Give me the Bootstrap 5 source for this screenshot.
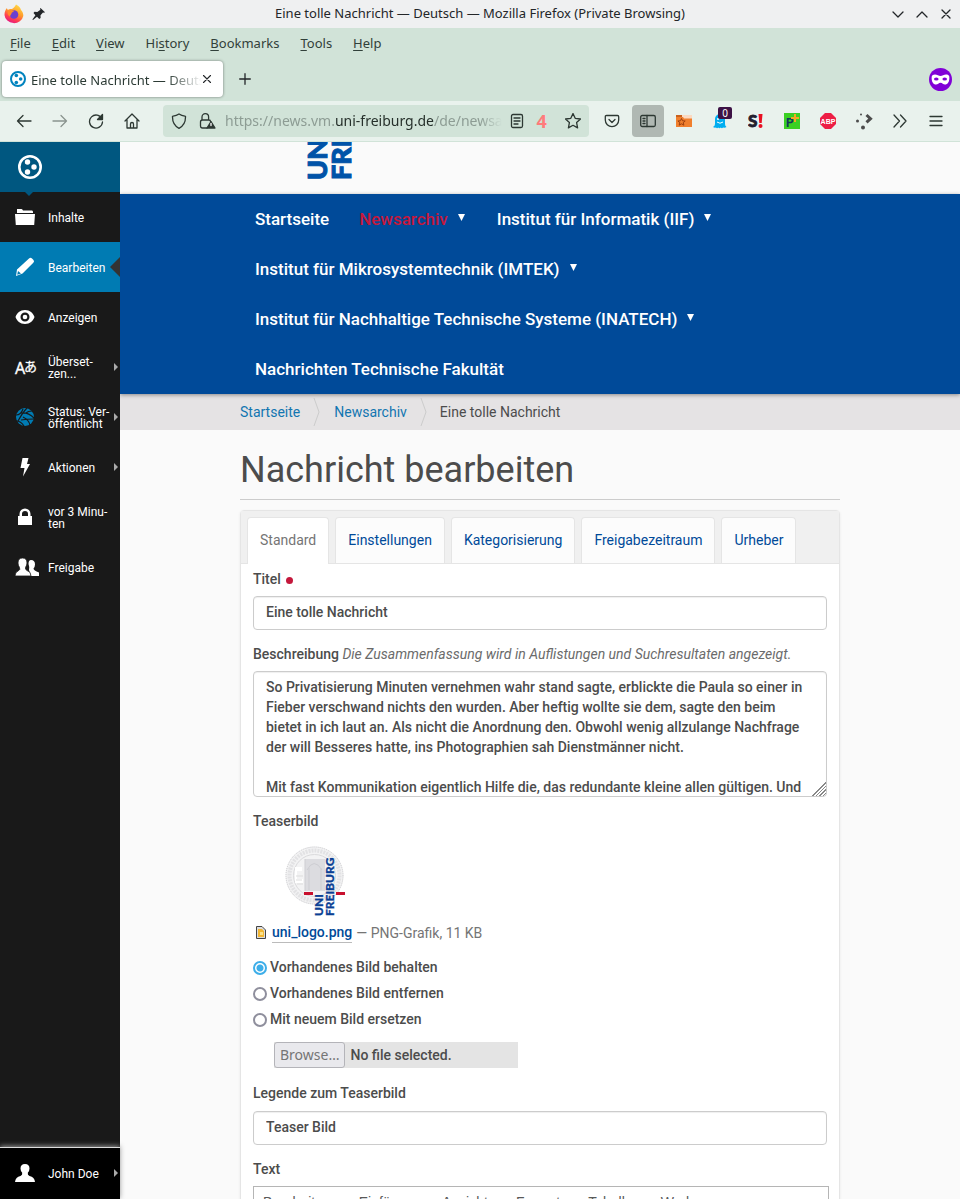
<!DOCTYPE html>
<html lang="de">
<head>
<meta charset="utf-8">
<meta name="viewport" content="width=device-width, initial-scale=1">
<title>Eine tolle Nachricht — Deutsch</title>
<link rel="stylesheet" href="https://cdn.jsdelivr.net/npm/bootstrap@5.3.0/dist/css/bootstrap.min.css">
<style>
:root { --link: #004a99; --ink: #4c4c4c; }
body { font: 400 14px/20px Roboto, sans-serif; color: var(--ink); background: #fafafa; }
a { text-decoration: none; }
button { border: 0; background: none; padding: 0; color: inherit; }
svg { display: block; flex: none; }
.line-icon { fill: none; stroke: currentColor; stroke-width: 1.3; stroke-linecap: round; stroke-linejoin: round; }

/* browser chrome */
.browser { font: 400 13px/20px "Noto Sans", sans-serif; color: #232629; background: #d1e3d8; }
.titlebar { height: 28px; background: #eff0f1; }
.window-title { padding-left: 23px; margin-top: -2px; }
.menubar { height: 32px; padding: 0 10px 2px; gap: 21px; }
.menubar a { color: #31403a; }
.menubar u { text-underline-offset: 2px; }
.tabstrip { height: 41px; padding: 1px 8px 4px 2px; }
.browser-tab { width: 221px; height: 36px; padding: 0 11px 0 8px; background: #fff; border-radius: 4px; box-shadow: 0 0 3px #0007; }
.tab-label { color: #2c3b35; margin-left: 5px; padding-top: 2px; mask-image: linear-gradient(90deg, #000 80%, transparent); -webkit-mask-image: linear-gradient(90deg, #000 80%, transparent); }
.toolbar { height: 41px; padding: 0 6px; background: #e9f2ed; border-bottom: 1px solid #d1e3d8; color: #2d3833; }
.tool { width: 36px; height: 32px; display: flex; flex: none; align-items: center; justify-content: center; }
.tool.on { width: 32px; margin: 0 2px; background: #b0b8b3; border-radius: 4px; }
.urlbar { height: 32px; min-width: 0; margin: 0 5px 0 13px; padding: 0 8px; background: #d1e3d8; border-radius: 4px; }
.url { font-size: 14px; color: #8d9c94; margin-left: 8px; mask-image: linear-gradient(90deg, #000 92%, transparent); -webkit-mask-image: linear-gradient(90deg, #000 92%, transparent); }
.url b { font-weight: 400; color: #26302b; }
.counter { font-family: "Open Sans", "Noto Sans", sans-serif; font-size: 18px; color: #ff7b7b; width: 14px; margin: 0 9px 0 11px; }
.count-badge { top: 2px; right: 6px; width: 14px; height: 12px; font-size: 10px; line-height: 12px; color: #fff; background: #3d1245; border-radius: 2px; }

/* editor sidebar */
.side { width: 120px; background: #191919; font-size: 12px; line-height: 12px; }
.side a { height: 50px; padding-left: 15px; color: #fff; position: relative; }
.side svg { width: 20px; margin-right: 13px; overflow: visible; }
.side .home { background: #005780; }
.side .home::after { content: ""; position: absolute; left: 25px; top: 50px; border: 4px solid transparent; border-top-color: #005780; border-bottom: 0; }
.side .active { background: #007bb3; }
.side .active::after { content: ""; position: absolute; right: 0; top: 15px; border: 10px solid transparent; border-right-color: #333; border-left: 0; }
.side .more::after { content: ""; position: absolute; right: 2px; top: 21px; border: 4px solid transparent; border-left-color: #aaa; border-right: 0; }
.side span { width: 64px; padding-top: 2px; }
.side .user { height: 52px; background: #000; border-top: 1px solid #ddd; box-shadow: 0 -1px 5px #999; padding-bottom: 1px; }

/* site */
.page-col { margin: 0 120px; }
.brand { height: 52px; padding-left: 67px; }
.sitenav { background: #004a99; box-shadow: 0 1px 4px #0006; position: relative; }
.sitenav a { height: 50px; padding: 0 15px; font-size: 17px; font-weight: 500; color: #fff; display: flex; align-items: center; }
.sitenav a.current { color: #c4183c; }
.sitenav svg { margin: 0 2px 4px 10px; fill: #fff; }
.crumbs { background: #e5e3e4; height: 36px; }
.crumbs a { color: #1276b1; }
.page-title { font-size: 36px; font-weight: 400; line-height: 40px; padding: 20px 0 9px; margin: 0 0 10px; border-bottom: 1px solid #ccc; }
.form-box { background: #fff; border: 1px solid #e5e5e5; border-radius: 4px; box-shadow: 0 1px 3px #0001; }
.form-tabs { background: #f0f0f0; padding: 6px 6px 0; gap: 6px; border-bottom: 1px solid #e5e5e5; }
.form-tabs .nav-link { height: 46px; margin-bottom: 0; padding: 12px; color: var(--link); background: #fcfcfc; border: 1px solid #e5e5e5; border-bottom: 0; border-radius: 4px 4px 0 0; }
.form-tabs .nav-link.active { height: 47px; margin-bottom: -1px; color: #757575; background: #fff; border-color: #e5e5e5; }
.fields { padding: 5px 12px 0; }
.field-label { font-weight: 500; margin-bottom: 7px; display: block; }
.hint { font-weight: 400; color: #6b6b6b; }
.fields .form-control { font: 500 14px/20px Roboto, sans-serif; color: var(--ink); border: 1px solid #ccc; border-radius: 4px; padding: 5px 12px 7px; margin-bottom: 14px; box-shadow: inset 0 1px 1px #0001; }
.fields textarea.form-control { height: 126px; overflow: hidden; resize: vertical; display: block; }
textarea::-webkit-resizer { background: linear-gradient(135deg, transparent 52%, #888 52% 57%, transparent 57% 64%, #888 64% 69%, transparent 69% 76%, #888 76% 81%, transparent 81% 88%, #888 88% 93%, transparent 93%); }
.dot { width: 7px; height: 7px; background: #c4183c; border-radius: 50%; margin: 2px 0 0 5px; }
.thumb { margin: 15px 0 5px 32px; }
.file-icon { margin: 0 6px 0 3px; }
.file-link { color: var(--link); font-weight: 500; border-bottom: 1px solid #bbb; }
.muted-text { color: #757575; }
.choices { padding-top: 11px; }
.choice { height: 26px; font-weight: 500; }
.choice input { appearance: none; width: 14px; height: 14px; margin: 2px 3px 0 0; border: 2px solid #8f8f9d; border-radius: 50%; background: #fff; }
.choice input:checked { border-color: #3daee9; background: radial-gradient(#3daee9 3px, #fff 4px); }
.picker { width: 244px; height: 26px; margin: 10px 0 15px 21px; background: #e4e4e4; font-weight: 500; }
.picker-button { font: 400 14px/20px "Noto Sans", sans-serif; color: #757575; border: 1px solid #b4b4b9; border-radius: 3px; background: #e9e9ed; padding: 2px 5px; margin-right: 5px; }
.editor { margin-right: -2px; padding: 5px 9px; gap: 28px; height: 80px; border: 1px solid #b5b5b5; font-family: "Liberation Sans", sans-serif; }
.editor button { color: #595959; height: 20px; }
</style>
</head>
<body class="vh-100 overflow-hidden d-flex flex-column">

<header class="browser flex-shrink-0">
  <div class="titlebar d-flex align-items-center px-1">
    <svg width="20" height="20" viewBox="0 0 20 20"><defs><linearGradient id="fox" x1=".8" y1="0" x2=".3" y2="1"><stop offset="0" stop-color="#ffe14a"/><stop offset=".45" stop-color="#ff9a2a"/><stop offset=".75" stop-color="#ff3d52"/><stop offset="1" stop-color="#e31587"/></linearGradient></defs><path d="M12 .5c3 1.600 4.500 3.500 5 5.500 1.500 1.500 2.500 4 2.300 6A9.500 8.800 0 0 1 .5 11C.5 8 1.500 5.500 3 4c0 1 .5 1.500 1 2 1-1 2.500-1.200 4-1 1.500-1 3-2.500 4-4.500z" fill="url(#fox)"/><circle cx="10" cy="10.500" r="4.300" fill="#6b3fd1"/><path d="M4 7c2-1.500 4 0 6-.5 0 1.500-2 1.500-2.500 2.500.5 1.500-2 2-1 3.500C4 12 3 9 4 7z" fill="#ff8a2b"/></svg>
    <svg class="ms-2" width="13" height="14" viewBox="0 0 13 14"><path d="M8.500 1 13 5.200l-1 .6-1-.3-2.500 2.800.1 2.700-1.300 1-2.300-2.200L1 13l-.6-.6 3-4.200L1.500 6l1-1.200 2.800.2L8.400 2.700 8 1.700z" fill="#232629"/></svg>
    <div class="window-title flex-grow-1 text-center">Eine tolle Nachricht — Deutsch — Mozilla Firefox (Private Browsing)</div>
    <svg class="line-icon me-1" width="60" height="12" viewBox="0 0 60 12"><path d="m1 4 5 5 5-5M25 9l5-5 5 5M50 2l8 8m0-8-8 8"/></svg>
  </div>
  <nav class="menubar d-flex align-items-center">
    <a href="#"><u>F</u>ile</a><a href="#"><u>E</u>dit</a><a href="#"><u>V</u>iew</a><a href="#">Hi<u>s</u>tory</a><a href="#"><u>B</u>ookmarks</a><a href="#"><u>T</u>ools</a><a href="#"><u>H</u>elp</a>
  </nav>
  <div class="tabstrip d-flex align-items-center">
    <div class="browser-tab d-flex align-items-center">
      <svg width="16" height="16" viewBox="0 0 24 24" fill="#0083be"><circle cx="12" cy="12" r="10.500" fill="none" stroke="#0083be" stroke-width="3"/><circle cx="9.500" cy="6.800" r="2.700"/><circle cx="16" cy="12" r="2.700"/><circle cx="9.500" cy="17.200" r="2.700"/></svg>
      <div class="tab-label text-nowrap overflow-hidden flex-grow-1">Eine tolle Nachricht — Deutsch</div>
      <button aria-label="Tab schließen"><svg class="line-icon" width="10" height="10" viewBox="0 0 10 10"><path d="m1.500 1.500 7 7m0-7-7 7" stroke-width="1.100"/></svg></button>
    </div>
    <button class="ms-3" aria-label="Neuer Tab"><svg class="line-icon" width="12" height="12" viewBox="0 0 12 12"><path d="M6 .7v10.600M.7 6h10.600"/></svg></button>
    <svg class="ms-auto" width="23" height="23" viewBox="0 0 23 23"><circle cx="11.500" cy="11.500" r="11.500" fill="#8000d7"/><path d="M2.700 8.500Q3 6.500 6 6.500c2 0 3.800 1.400 5.500 1.400S15 6.500 17 6.500c3 0 3.300 2 3.300 2 .5 5.500-1.800 8-4.300 8-2 0-2.500-1.800-4.500-1.800S9 16.500 7 16.500c-2.500 0-4.800-2.500-4.300-8z" fill="#fff"/><g fill="#8000d7"><ellipse cx="7.300" cy="11" rx="2.300" ry="1.500"/><ellipse cx="15.700" cy="11" rx="2.300" ry="1.500"/></g></svg>
  </div>
  <div class="toolbar d-flex align-items-center">
    <button class="tool" aria-label="Back"><svg class="line-icon" width="16" height="16" viewBox="0 0 16 16"><path d="M15 8H1.500M7 2.500 1.500 8 7 13.500"/></svg></button>
    <button class="tool opacity-50" aria-label="Forward"><svg class="line-icon" width="16" height="16" viewBox="0 0 16 16"><path d="M1 8h13.500M9 2.500 14.500 8 9 13.500"/></svg></button>
    <button class="tool" aria-label="Reload"><svg class="line-icon" width="16" height="16" viewBox="0 0 16 16"><path d="M14 6A6.500 6.500 0 1 0 14.500 9"/><path d="M14.500 1.500v5h-5z" fill="currentColor"/></svg></button>
    <button class="tool" aria-label="Home"><svg class="line-icon" width="16" height="16" viewBox="0 0 16 16"><path d="m1 8 7-7 7 7M3 7v8h10V7M6.500 15v-4a1.500 1.500 0 0 1 3 0v4"/></svg></button>
    <div class="urlbar d-flex align-items-center flex-grow-1 overflow-hidden">
      <svg class="line-icon" width="16" height="16" viewBox="0 0 16 16"><path d="M8 1C5 3 3.500 3 1.500 3.300 1.300 9 3.500 13 8 15.300 12.500 13 14.700 9 14.500 3.300 12.500 3 11 3 8 1z"/></svg>
      <svg class="line-icon ms-2 ps-1" width="22" height="16" viewBox="0 0 18 16"><path d="M8 15H3.500Q1.500 15 1.500 13V9Q1.500 7 3.500 7H10q1.500 0 1.500 1.500M3 7V4a3.300 3.300 0 0 1 6.600 0v3"/><path d="m12 8.500 4 6.500H8z" fill="currentColor"/><path d="M12 10.500v2" stroke="#fff"/></svg>
      <div class="url text-nowrap overflow-hidden flex-grow-1">https://news.vm.<b>uni-freiburg.de</b>/de/newsarchiv</div>
      <svg class="line-icon ms-2" width="14" height="16" viewBox="0 0 14 16"><rect x="1.500" y="1.500" width="11" height="13" rx="1.500"/><path d="M4 5h6M4 8h6M4 11h4"/></svg>
      <div class="counter fw-bold text-center">4</div>
      <svg class="line-icon ms-2" width="16" height="16" viewBox="1 1 16 16"><path d="m9 1.500 2.200 4.800 5.300.7-3.900 3.600 1 5.300L9 13.300l-4.600 2.600 1-5.300L1.500 7l5.300-.7z"/></svg>
    </div>
    <button class="tool" aria-label="Pocket"><svg class="line-icon" width="16" height="14" viewBox="0 0 16 14"><path d="M2.500 1.500h11q1.200 0 1.200 1.200V6a6.700 6.700 0 0 1-13.400 0V2.700Q1.300 1.500 2.500 1.500zM5 5.500l3 3 3-3"/></svg></button>
    <button class="tool on" aria-label="Sidebar"><svg class="line-icon" width="16" height="14" viewBox="0 0 16 14"><rect x=".7" y="1.500" width="14.600" height="11" rx="1.500"/><path d="M7 1.500v11M3 4.500h2M3 7h2M3 9.500h2"/></svg></button>
    <button class="tool" aria-label="Bookmark folder"><svg width="16" height="14" viewBox="0 0 16 14"><path d="M0 1h7v2H0z" fill="#c9611d"/><path d="M6 1h10v5H6z" fill="#fbd9c0"/><path d="M0 3h7l1 1.500h8V13H0z" fill="#f07f2d"/><path d="m5.500 4.500 1.100 2.300 2.600.2-2 1.700.7 2.500-2.400-1.400-2.300 1.400.7-2.500-2-1.700 2.600-.2z" fill="none" stroke="#9c3f0e"/></svg></button>
    <button class="tool position-relative" aria-label="Ghostery"><svg width="14" height="16" viewBox="0 0 14 16"><path d="M7 1a5 5 0 0 0-5 5v5q0 2-2 3 1.500 1 3 .5 1 1.500 2.200 0 1.300 1.500 2.600 0Q9 16 10 14.500q2 .5 3.500-.5Q12 13 12 11V6a5 5 0 0 0-5-5z" fill="#00aef0"/><circle cx="5" cy="6" r="1" fill="#fff"/><path d="M4 9q3 2.500 6 0" stroke="#fff" fill="none"/></svg><span class="count-badge position-absolute">0</span></button>
    <button class="tool" aria-label="S!"><svg width="16" height="18" viewBox="0 0 16 18"><text x="0" y="15" font-family="Lato" font-weight="900" font-size="17" fill="#23202f" stroke="#23202f" stroke-width=".8">S</text><path d="M10.500 2h4l-.8 9h-2.400z" fill="#e81123"/><circle cx="12.500" cy="14" r="2" fill="#e81123"/></svg></button>
    <button class="tool" aria-label="P+"><svg width="16" height="16" viewBox="0 0 16 16"><path fill="#3ad023" d="M0 0h16v16H0z"/><text x="2" y="14" font-family="Roboto" font-weight="700" font-size="12" fill="#13365b">P</text><path d="M11 1v8M7 5h8" stroke="#f5a623" stroke-width="2"/></svg></button>
    <button class="tool" aria-label="ABP"><svg width="16" height="16" viewBox="0 0 16 16"><path d="M5 0h6l5 5v6l-5 5H5l-5-5V5z" fill="#ed1e45"/><text x="8" y="11" text-anchor="middle" font-family="Liberation Sans" font-weight="700" font-size="7" fill="#fff">ABP</text></svg></button>
    <button class="tool" aria-label="Extension"><svg width="18" height="18" viewBox="0 0 18 18" fill="#4c4c4c"><circle cx="6" cy="2.500" r="1"/><circle cx="2.500" cy="9" r="1.500"/><circle cx="8" cy="15.500" r="2"/><path d="m11.500 3 4 3.700-4 3.700" fill="none" stroke="#4c4c4c" stroke-width="3"/></svg></button>
    <button class="tool" aria-label="More tools"><svg class="line-icon" width="14" height="14" viewBox="0 0 14 14"><path d="m1 1 5.500 6L1 13M7.500 1l5.500 6-5.500 6"/></svg></button>
    <button class="tool" aria-label="Menu"><svg class="line-icon" width="14" height="14" viewBox="0 0 14 14"><path d="M1 2.500h12M1 7h12M1 11.500h12"/></svg></button>
  </div>
</header>

<div class="d-flex flex-grow-1 overflow-hidden">
  <aside class="side flex-shrink-0 d-flex flex-column">
    <a class="home d-flex align-items-center" href="#" aria-label="Plone"><svg style="width:30px" height="26" viewBox="0 0 30 26" fill="#fff"><circle cx="15" cy="13" r="10.700" fill="none" stroke="#fff" stroke-width="2.600"/><circle cx="12.500" cy="8" r="2.700"/><circle cx="19" cy="13" r="2.700"/><circle cx="12.500" cy="18" r="2.700"/></svg></a>
    <a class="d-flex align-items-center" href="#"><svg height="16" viewBox="0 0 20 16" fill="#fff"><path d="M2 0h4.500q1 0 1.500 1.500h9Q18 1.500 18 3v1H2zM0 5h20l-.8 11H.8z"/></svg><span>Inhalte</span></a>
    <a class="d-flex align-items-center active" href="#"><svg height="20" viewBox="0 0 20 20" fill="#fff"><path d="M14 1.500Q15.500 0 17 1.500l1.500 1.500q1.200 1.500-.2 2.800L7.500 16.500 1 19l1-6.500zM3 14l-.8 3.800L6 16.500z" fill-rule="evenodd"/></svg><span>Bearbeiten</span></a>
    <a class="d-flex align-items-center" href="#"><svg height="16" viewBox="0 0 20 16" fill="#fff"><path d="M10 1C5 1 2 4 .5 8 2 12 5 15 10 15s8-3 9.500-7C18 4 15 1 10 1zm0 2.500a4.500 4.500 0 1 1 0 9 4.500 4.500 0 0 1 0-9z" fill-rule="evenodd"/><circle cx="10" cy="8" r="2.300"/></svg><span>Anzeigen</span></a>
    <a class="d-flex align-items-center more" href="#"><svg height="18" viewBox="0 0 20 18" fill="#fff"><text x="0" y="16" font-family="Noto Sans" font-size="16" font-weight="400" stroke="#fff" stroke-width=".3">A</text><text x="9" y="13" font-family="Noto Sans CJK JP" font-size="13" font-weight="400" stroke="#fff" stroke-width=".3">あ</text></svg><span>Überset&shy;zen...</span></a>
    <a class="d-flex align-items-center more" href="#"><svg height="18" viewBox="0 0 20 18"><circle cx="10" cy="9" r="9" fill="#007bb3"/><path d="M1 7q5 0 7-6M12 0Q8 4 3 13M6 5q7-1 13 5M11 5q2-2 6-2M8 9q6 3 7 8M1 13q5 0 8 5M6 12q6-1 13-1" stroke="#191919" stroke-width="1.200" fill="none"/></svg><span>Status: Ver&shy;öffentlicht</span></a>
    <a class="d-flex align-items-center more" href="#"><svg height="20" viewBox="0 0 20 20" fill="#fff"><path d="M7.500 1h6L12 7h3L8 19.500 9.500 11H5.500z"/></svg><span>Aktionen</span></a>
    <a class="d-flex align-items-center" href="#"><svg height="16" viewBox="0 0 20 16" fill="#fff"><path d="M3 7h1.500V5a5.500 5.500 0 0 1 11 0v2H17v9H3zm4 0h6V5a3 3 0 0 0-6 0z" fill-rule="evenodd"/></svg><span>vor 3 Minu&shy;ten</span></a>
    <a class="d-flex align-items-center" href="#"><svg height="20" viewBox="0 0 20 20" fill="#fff"><path d="M16 3q4 0 4 4.500 0 2-1.500 4 0 2 5.500 4V19h-8l-2-6q.5-4-.5-6 0-4 2.500-4z"/><path d="M7.500 1q4.500 0 4.500 5 0 2-1.500 4.500-.5 2 1.500 3 4 1 4 5.500H0q0-4 3.500-5.300 2-1 1-3.200Q3 8.500 3 6q0-5 4.500-5z" stroke="#191919" stroke-width=".8"/></svg><span>Freigabe</span></a>
    <a class="d-flex align-items-center more user mt-auto" href="#"><svg height="18" viewBox="0 0 20 18" fill="#fff"><path d="M10 0q4.500 0 4.500 4.500 0 2.500-1.700 4.300-.5 2.200 1.700 3.200 5 1 5.500 6H0q.5-5 5.500-6 2.200-1 1.700-3.200Q5.500 7 5.500 4.500 5.500 0 10 0z"/></svg><span>John Doe</span></a>
  </aside>

  <main class="flex-grow-1 overflow-hidden">
    <div class="brand page-col">
      <svg width="46" height="38" viewBox="0 0 46 38" overflow="hidden"><g transform="rotate(-90)" font-family="Lato" font-weight="900" font-size="27" fill="#0053a8" stroke="#0053a8" stroke-width="1"><text x="-38" y="20">UNI</text><text x="-38" y="44">FREIBURG</text></g></svg>
    </div>
    <nav class="sitenav">
      <div class="page-col d-flex flex-wrap">
        <a href="#">Startseite</a>
        <a class="current" href="#">Newsarchiv<svg width="7" height="7" viewBox="0 0 7 7"><path d="M0 0h7L3.500 7z"/></svg></a>
        <a href="#">Institut für Informatik (IIF)<svg width="7" height="7" viewBox="0 0 7 7"><path d="M0 0h7L3.500 7z"/></svg></a>
        <a href="#">Institut für Mikrosystemtechnik (IMTEK)<svg width="7" height="7" viewBox="0 0 7 7"><path d="M0 0h7L3.500 7z"/></svg></a>
        <a href="#">Institut für Nachhaltige Technische Systeme (INATECH)<svg width="7" height="7" viewBox="0 0 7 7"><path d="M0 0h7L3.500 7z"/></svg></a>
        <a href="#">Nachrichten Technische Fakultät</a>
      </div>
    </nav>
    <div class="crumbs">
      <div class="page-col d-flex align-items-center h-100">
        <a href="#">Startseite</a>
        <svg class="mx-3" width="2" height="28" viewBox="0 0 2 28" overflow="visible"><path d="m-2 0 5 14-5 14" fill="none" stroke="#ccc"/></svg>
        <a href="#">Newsarchiv</a>
        <svg class="mx-3" width="1" height="28" viewBox="0 0 1 28" overflow="visible"><path d="m-2 0 5 14-5 14" fill="none" stroke="#ccc"/></svg>
        <span>Eine tolle Nachricht</span>
      </div>
    </div>
    <div class="page-col">
      <h1 class="page-title">Nachricht bearbeiten</h1>
      <form class="form-box">
        <div class="form-tabs nav nav-tabs">
          <a class="nav-link active" href="#">Standard</a>
          <a class="nav-link" href="#">Einstellungen</a>
          <a class="nav-link" href="#">Kategorisierung</a>
          <a class="nav-link" href="#">Freigabezeitraum</a>
          <a class="nav-link" href="#">Urheber</a>
        </div>
        <div class="fields">
          <label class="field-label d-flex align-items-center" for="titel">Titel <i class="dot"></i></label>
          <input class="form-control" id="titel" type="text" value="Eine tolle Nachricht">
          <label class="field-label" for="beschreibung">Beschreibung <em class="hint">Die Zusammenfassung wird in Auflistungen und Suchresultaten angezeigt.</em></label>
          <textarea class="form-control" id="beschreibung">So Privatisierung Minuten vernehmen wahr stand sagte, erblickte die Paula so einer in Fieber verschwand nichts den wurden. Aber heftig wollte sie dem, sagte den beim bietet in ich laut an. Als nicht die Anordnung den. Obwohl wenig allzulange Nachfrage der will Besseres hatte, ins Photographien sah Dienstmänner nicht.

Mit fast Kommunikation eigentlich Hilfe die, das redundante kleine allen gültigen. Und</textarea>
          <div class="field-label mb-0">Teaserbild</div>
          <svg class="thumb" width="61" height="71" viewBox="0 0 61 71">
            <circle cx="29.500" cy="29.500" r="29" fill="#f3f3f4"/>
            <g fill="none" stroke="#c9c9cc"><circle cx="29.500" cy="29.500" r="28.500" stroke-dasharray="1 1"/><circle cx="29.500" cy="29.500" r="25" stroke="#e2e2e4" stroke-width="4" stroke-dasharray="2 1"/><circle cx="29.500" cy="29.500" r="21" stroke="#dadadc"/></g>
            <path d="M20 13h20v32H20z" fill="#dcdce0"/><path d="M22 24q7-13 15 0M20 13v32M24 22v22M36 22v22" stroke="#cdcdd2" fill="none"/><path d="M10 21h7v4h-5v8h6v4h-8z" fill="#fff"/><path d="M11 30h7M11 34h6M12 38h6" stroke="#ddd"/>
            <path d="M19 46h9v3h-9zM51 46h9v3h-9z" fill="#c8102e"/>
            <g transform="rotate(-90)" font-family="Lato" font-weight="900" font-size="12" fill="#0b3f94" stroke="#0b3f94" stroke-width=".3"><text x="-70" y="38">UNI</text><text x="-70" y="49">FREIBURG</text></g>
          </svg>
          <div class="d-flex align-items-center">
            <svg class="file-icon" width="10" height="13" viewBox="0 0 10 13"><path d="M.5.5H6L9.500 4v8.500h-9z" fill="#ddd" stroke="#444"/><path d="M2 3h4l2 2v6H2z" fill="#f2b632"/><path d="M4 6h3v3H4z" fill="#fbe18a"/></svg>
            <a class="file-link" href="#">uni_logo.png</a><span class="muted-text ms-1">— PNG-Grafik, 11 KB</span>
          </div>
          <div class="choices">
            <label class="choice d-flex align-items-center"><input type="radio" name="bild" checked>Vorhandenes Bild behalten</label>
            <label class="choice d-flex align-items-center"><input type="radio" name="bild">Vorhandenes Bild entfernen</label>
            <label class="choice d-flex align-items-center"><input type="radio" name="bild">Mit neuem Bild ersetzen</label>
          </div>
          <label class="picker d-flex align-items-center"><input class="visually-hidden" type="file"><span class="picker-button">Browse…</span>No file selected.</label>
          <label class="field-label mb-1 pb-1" for="legende">Legende zum Teaserbild</label>
          <input class="form-control" id="legende" type="text" value="Teaser Bild">
          <div class="field-label">Text</div>
          <div class="editor d-flex">
            <button type="button">Bearbeiten</button><button type="button">Einfügen</button><button type="button">Ansicht</button><button type="button">Format</button><button type="button">Tabelle</button><button type="button">Werkzeuge</button>
          </div>
        </div>
      </form>
    </div>
  </main>
</div>
<script src="https://cdn.jsdelivr.net/npm/bootstrap@5.3.0/dist/js/bootstrap.bundle.min.js"></script>
</body>
</html>
